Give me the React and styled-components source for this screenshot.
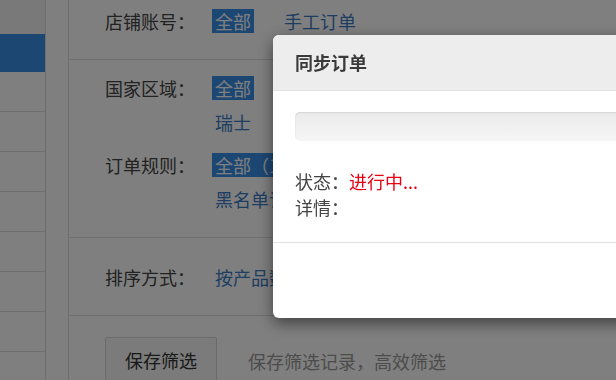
import React from 'react';
import styled, { createGlobalStyle } from 'styled-components';

const GlobalStyle = createGlobalStyle`
  html, body {
    margin: 0;
    padding: 0;
    background: #fff;
    overflow: hidden;
  }
  body {
    font-family: "Noto Sans CJK SC", "Liberation Sans", sans-serif;
    font-size: 18px;
    color: #333;
  }
`;

const Page = styled.div`
  display: flex;
  gap: 22px;
  width: 616px;
  height: 380px;
`;

const Sidebar = styled.ul`
  list-style: none;
  margin: 0;
  padding: 0;
  width: 45px;
  flex: none;
  border-right: 1px solid #dcdcdc;
`;

const SideItem = styled.li`
  height: ${({ h }) => h || 39}px;
  background: ${({ active, top }) => (active ? '#3a8ee6' : top ? '#f2f2f2' : '#fff')};
  border-bottom: ${({ line }) => (line ? '1px solid #dcdcdc' : 'none')};
`;

const Panel = styled.div`
  flex: 1;
  border-left: 1px solid #dcdcdc;
`;

const Section = styled.div`
  display: flex;
  flex-direction: column;
  gap: 9px;
  padding: ${({ pad }) => pad};
  padding-left: 36px;
  border-bottom: ${({ last }) => (last ? 'none' : '1px solid #dcdcdc')};
`;

const FilterRow = styled.div`
  display: flex;
  align-items: flex-start;
  margin-top: ${({ shift }) => shift || 0}px;
`;

const Label = styled.div`
  width: 107px;
  flex: none;
  line-height: 34px;
  color: #444;
`;

const Options = styled.div`
  flex: 1;
  width: 390px;
  display: flex;
  flex-wrap: wrap;
  gap: 10px 27px;
  padding: 5px 0;
`;

const Option = styled.span`
  line-height: 24px;
  padding: 0 3px;
  color: ${({ active }) => (active ? '#fff' : '#3b7cc4')};
  background: ${({ active }) => (active ? '#3a8ee6' : 'transparent')};
  white-space: nowrap;
`;

const Actions = styled.div`
  display: flex;
  align-items: center;
  gap: 31px;
`;

const SaveButton = styled.button`
  font: inherit;
  font-size: 18px;
  color: #333;
  height: 46px;
  padding: 0 19px;
  background: #f6f6f6;
  border: 1px solid #d6d6d6;
  border-radius: 2px;
`;

const Hint = styled.span`
  color: #999;
  padding-top: 2px;
`;

const Overlay = styled.div`
  position: fixed;
  inset: 0;
  background: rgba(0, 0, 0, 0.5);
`;

const Modal = styled.div`
  position: fixed;
  left: 273px;
  top: 35px;
  width: 600px;
  background: #fff;
  border-radius: 6px;
  overflow: hidden;
  box-shadow: 0 5px 15px rgba(0, 0, 0, 0.5);
`;

const ModalHeader = styled.div`
  height: 55px;
  padding: 0 22px;
  background: #ededed;
  border-bottom: 1px solid #e2e2e2;
`;

const ModalTitle = styled.h4`
  margin: 0;
  font-size: 18px;
  font-weight: 700;
  line-height: 55px;
  color: #3a3a3a;
`;

const ModalBody = styled.div`
  padding: 21px 22px 22px;
`;

const Progress = styled.div`
  height: 29px;
  margin-bottom: 27px;
  border-radius: 5px;
  background: linear-gradient(to bottom, #ebebeb 0%, #f5f5f5 100%);
  box-shadow: inset 0 1px 2px rgba(0, 0, 0, 0.1);
`;

const InfoLine = styled.div`
  display: flex;
  height: 26px;
  line-height: 26px;
  color: #444;
`;

const Status = styled.span`
  color: #e60012;
`;

const ModalFooter = styled.div`
  height: 75px;
  border-top: 1px solid #e2e2e2;
`;

const sideItems = [
  { top: true, h: 34 },
  { active: true, h: 38 },
  { line: true },
  { line: true },
  { line: true },
  { line: true },
  { line: true },
  { line: true },
  { line: true },
];

const App = () => {
  return (
    <>
      <GlobalStyle />
      <Page>
        <Sidebar>
          {sideItems.map((it, i) => (
            <SideItem key={i} {...it} />
          ))}
        </Sidebar>
        <Panel>
          <Section pad="4px 0 21px">
            <FilterRow>
              <Label>店铺账号：</Label>
              <Options>
                <Option active>全部</Option>
                <Option>手工订单</Option>
              </Options>
            </FilterRow>
          </Section>
          <Section pad="11px 0 21px">
            <FilterRow>
              <Label>国家区域：</Label>
              <Options>
                <Option active>全部</Option>
                <Option>德国</Option>
                <Option>法国</Option>
                <Option>英国</Option>
                <Option>意大利</Option>
                <Option>瑞士</Option>
                <Option>奥地利</Option>
              </Options>
            </FilterRow>
            <FilterRow>
              <Label>订单规则：</Label>
              <Options>
                <Option active>全部（128）</Option>
                <Option>白名单订单</Option>
                <Option>普通订单</Option>
                <Option>黑名单订单</Option>
              </Options>
            </FilterRow>
          </Section>
          <Section pad="22px 0 21px">
            <FilterRow>
              <Label>排序方式：</Label>
              <Options>
                <Option>按产品数量</Option>
              </Options>
            </FilterRow>
          </Section>
          <Section pad="21px 0 0" last>
            <Actions>
              <SaveButton>保存筛选</SaveButton>
              <Hint>保存筛选记录，高效筛选</Hint>
            </Actions>
          </Section>
        </Panel>
      </Page>
      <Overlay />
      <Modal>
        <ModalHeader>
          <ModalTitle>同步订单</ModalTitle>
        </ModalHeader>
        <ModalBody>
          <Progress />
          <InfoLine>
            <span>状态：</span>
            <Status>进行中...</Status>
          </InfoLine>
          <InfoLine>
            <span>详情：</span>
          </InfoLine>
        </ModalBody>
        <ModalFooter />
      </Modal>
    </>
  );
};

export default App;
